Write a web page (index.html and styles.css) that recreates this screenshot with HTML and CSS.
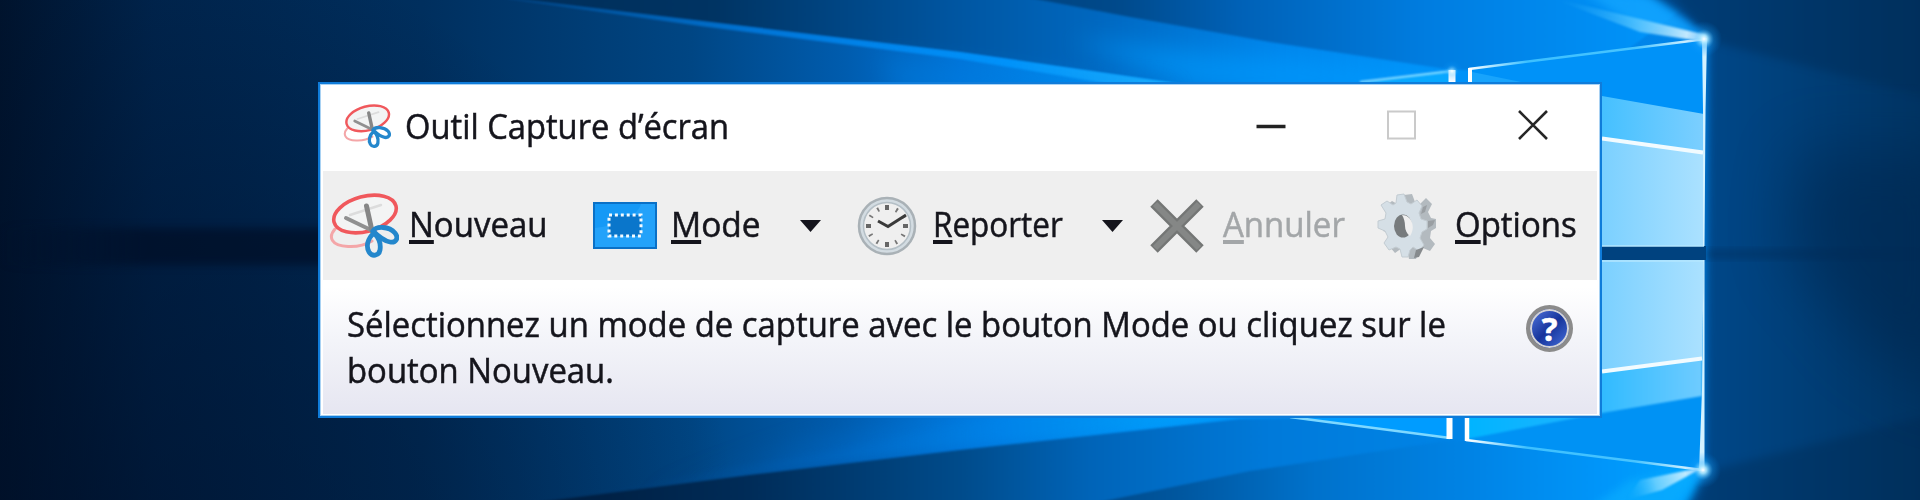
FILE: index.html
```html
<!DOCTYPE html>
<html lang="fr">
<head>
    <meta charset="UTF-8">
    <meta name="viewport" content="width=device-width, initial-scale=1.0">
    <title>Outil Capture d’écran</title>
    <link rel="stylesheet" href="styles.css">
</head>
<body>
    <div class="desktop">
        <svg class="wallpaper" viewBox="0 0 1920 500" aria-hidden="true">
            <defs>
                <linearGradient id="base" x1="0" y1="0" x2="1920" y2="0" gradientUnits="userSpaceOnUse">
                    <stop offset="0" stop-color="#00142e"/>
                    <stop offset="0.08" stop-color="#00254e"/>
                    <stop offset="0.22" stop-color="#002f5e"/>
                    <stop offset="0.36" stop-color="#004684"/>
                    <stop offset="0.44" stop-color="#005cae"/>
                    <stop offset="0.5" stop-color="#0074d8"/>
                    <stop offset="0.6" stop-color="#0096fa"/>
                    <stop offset="0.75" stop-color="#0088ee"/>
                    <stop offset="1" stop-color="#0080e4"/>
                </linearGradient>
                <radialGradient id="leftShade" cx="100" cy="560" r="640" gradientUnits="userSpaceOnUse">
                    <stop offset="0" stop-color="#000d24" stop-opacity="0.6"/>
                    <stop offset="0.5" stop-color="#000d24" stop-opacity="0.35"/>
                    <stop offset="1" stop-color="#000d24" stop-opacity="0"/>
                </radialGradient>
                <linearGradient id="band" x1="0" y1="0" x2="360" y2="0" gradientUnits="userSpaceOnUse">
                    <stop offset="0" stop-color="#000e26" stop-opacity="0"/>
                    <stop offset="0.4" stop-color="#000e26" stop-opacity="0.7"/>
                    <stop offset="1" stop-color="#000e26" stop-opacity="0.7"/>
                </linearGradient>
                <linearGradient id="topOuter" x1="480" y1="0" x2="1420" y2="0" gradientUnits="userSpaceOnUse">
                    <stop offset="0" stop-color="#002d58"/>
                    <stop offset="0.25" stop-color="#003463"/>
                    <stop offset="0.5" stop-color="#0055a0"/>
                    <stop offset="0.66" stop-color="#0068c0"/>
                    <stop offset="0.85" stop-color="#0086ec"/>
                    <stop offset="1" stop-color="#0092f8"/>
                </linearGradient>
                <linearGradient id="topInner" x1="1030" y1="0" x2="1640" y2="0" gradientUnits="userSpaceOnUse">
                    <stop offset="0" stop-color="#004480"/>
                    <stop offset="0.15" stop-color="#004a8c"/>
                    <stop offset="0.35" stop-color="#0062b8"/>
                    <stop offset="0.65" stop-color="#007de0"/>
                    <stop offset="1" stop-color="#0092f8"/>
                </linearGradient>
                <linearGradient id="bottomOuter" x1="550" y1="0" x2="1450" y2="0" gradientUnits="userSpaceOnUse">
                    <stop offset="0" stop-color="#001d3e"/>
                    <stop offset="0.22" stop-color="#002c58"/>
                    <stop offset="0.46" stop-color="#004c8c"/>
                    <stop offset="0.6" stop-color="#0064b8"/>
                    <stop offset="0.8" stop-color="#007ada"/>
                    <stop offset="1" stop-color="#0084e6"/>
                </linearGradient>
                <linearGradient id="bottomInner" x1="1060" y1="0" x2="1700" y2="0" gradientUnits="userSpaceOnUse">
                    <stop offset="0" stop-color="#004480"/>
                    <stop offset="0.18" stop-color="#00569e"/>
                    <stop offset="0.4" stop-color="#0072cc"/>
                    <stop offset="0.65" stop-color="#0084e6"/>
                    <stop offset="0.85" stop-color="#0096fa"/>
                    <stop offset="1" stop-color="#00a4ff"/>
                </linearGradient>
                <linearGradient id="beam" x1="470" y1="0" x2="1180" y2="0" gradientUnits="userSpaceOnUse">
                    <stop offset="0" stop-color="#0060b8" stop-opacity="0.3"/>
                    <stop offset="0.4" stop-color="#007ee6" stop-opacity="0.8"/>
                    <stop offset="0.75" stop-color="#0094fc"/>
                    <stop offset="1" stop-color="#20b4ff"/>
                </linearGradient>
                <linearGradient id="beamLow" x1="560" y1="0" x2="1240" y2="0" gradientUnits="userSpaceOnUse">
                    <stop offset="0" stop-color="#004a90" stop-opacity="0"/>
                    <stop offset="0.4" stop-color="#0068c4" stop-opacity="0.7"/>
                    <stop offset="0.65" stop-color="#0084ea"/>
                    <stop offset="1" stop-color="#00a8ff"/>
                </linearGradient>
                <linearGradient id="rightDark" x1="1700" y1="0" x2="1920" y2="0" gradientUnits="userSpaceOnUse">
                    <stop offset="0" stop-color="#00488a"/>
                    <stop offset="0.45" stop-color="#003f78"/>
                    <stop offset="1" stop-color="#003463"/>
                </linearGradient>
                <linearGradient id="lightPane" x1="1602" y1="0" x2="1704" y2="0" gradientUnits="userSpaceOnUse">
                    <stop offset="0" stop-color="#7bd0ff"/>
                    <stop offset="1" stop-color="#abe1ff"/>
                </linearGradient>
                <linearGradient id="midPane" x1="1602" y1="0" x2="1704" y2="0" gradientUnits="userSpaceOnUse">
                    <stop offset="0" stop-color="#45c0ff"/>
                    <stop offset="1" stop-color="#7ccfff"/>
                </linearGradient>
                <linearGradient id="lowPane" x1="1467" y1="0" x2="1704" y2="0" gradientUnits="userSpaceOnUse">
                    <stop offset="0" stop-color="#00b4ff"/>
                    <stop offset="0.4" stop-color="#18b4ff"/>
                    <stop offset="1" stop-color="#70ccff"/>
                </linearGradient>
                <linearGradient id="edgeLine" x1="1468" y1="0" x2="1706" y2="0" gradientUnits="userSpaceOnUse">
                    <stop offset="0" stop-color="#ffffff"/>
                    <stop offset="0.25" stop-color="#3cc0ff"/>
                    <stop offset="0.7" stop-color="#48c4ff"/>
                    <stop offset="1" stop-color="#ffffff"/>
                </linearGradient>
                <linearGradient id="rayTop" x1="1560" y1="0" x2="1706" y2="38" gradientUnits="userSpaceOnUse">
                    <stop offset="0" stop-color="#28b4ff" stop-opacity="0"/>
                    <stop offset="0.5" stop-color="#6ad0ff" stop-opacity="0.6"/>
                    <stop offset="1" stop-color="#ffffff"/>
                </linearGradient>
                <linearGradient id="rayBottom" x1="1703" y1="470" x2="1625" y2="494" gradientUnits="userSpaceOnUse">
                    <stop offset="0" stop-color="#ffffff"/>
                    <stop offset="0.6" stop-color="#7ad6ff" stop-opacity="0.8"/>
                    <stop offset="1" stop-color="#10acff" stop-opacity="0"/>
                </linearGradient>
                <radialGradient id="flare">
                    <stop offset="0" stop-color="#ffffff"/>
                    <stop offset="0.2" stop-color="#a8e6ff" stop-opacity="0.9"/>
                    <stop offset="0.55" stop-color="#1aa4ff" stop-opacity="0.3"/>
                    <stop offset="1" stop-color="#0090ff" stop-opacity="0"/>
                </radialGradient>
                <filter id="soft1" x="-20%" y="-50%" width="140%" height="200%" color-interpolation-filters="sRGB"><feGaussianBlur stdDeviation="1"/></filter>
                <filter id="soft4" x="-20%" y="-50%" width="140%" height="200%" color-interpolation-filters="sRGB"><feGaussianBlur stdDeviation="4"/></filter>
                <filter id="soft12" x="-50%" y="-80%" width="200%" height="260%" color-interpolation-filters="sRGB"><feGaussianBlur stdDeviation="12"/></filter>
                <filter id="soft30" x="-80%" y="-80%" width="260%" height="260%" color-interpolation-filters="sRGB"><feGaussianBlur stdDeviation="30"/></filter>
            </defs>

            <rect width="1920" height="500" fill="url(#base)"/>
            <rect width="760" height="500" fill="url(#leftShade)"/>
            <rect x="0" y="228" width="360" height="37" fill="url(#band)" filter="url(#soft4)"/>

            <!-- light beams above the window -->
            <path d="M480 -6 L960 53 L1180 84 L1460 90 L1640 -6 Z" fill="url(#topOuter)" filter="url(#soft1)"/>
            <path d="M1070 40 Q1250 56 1440 74 L1400 96 L1200 90 Z" fill="#009cff" opacity="0.6" filter="url(#soft12)"/>
            <path d="M1020 -4 L1130 17 L1270 42 L1452 70 L1600 70 L1700 -4 Z" fill="url(#topInner)" filter="url(#soft1)"/>
            <path d="M460 -8 L960 52 L1180 84 L1110 84 L960 59 L700 26 Z" fill="url(#beam)" filter="url(#soft1)"/>
            <path d="M880 58 L1180 88 L1160 96 L900 96 Z" fill="#0080e4" opacity="0.4" filter="url(#soft12)"/>

            <!-- light beams below the window -->
            <path d="M640 500 L750 470 L960 440 L1240 408 L1000 408 L800 446 Z" fill="url(#beamLow)" filter="url(#soft12)"/>
            <path d="M560 502 L750 474 L960 446 L1240 416 L1020 414 L800 458 Z" fill="url(#beamLow)" opacity="0.8" filter="url(#soft4)"/>
            <path d="M540 502 L750 475 L960 450 L1240 419 L1480 414 L1740 510 Z" fill="url(#bottomOuter)" filter="url(#soft1)"/>
            <path d="M1090 504 L1250 471 L1452 440 L1720 460 L1720 504 Z" fill="url(#bottomInner)" filter="url(#soft1)"/>

            <!-- dark side, right of the logo -->
            <path d="M1636 -10 Q1680 10 1708 40 L1704 470 Q1696 490 1684 512 L1940 512 L1940 -10 Z" fill="url(#rightDark)" filter="url(#soft4)"/>
            <path d="M1712 42 L1930 98 L1930 -20 L1660 -20 Z" fill="#002a54" opacity="0.4" filter="url(#soft4)"/>
            <path d="M1712 470 L1930 415 L1930 520 L1690 520 Z" fill="#00284f" opacity="0.35" filter="url(#soft4)"/>
            <path d="M1800 150 L1960 150 L1960 400 L1870 350 L1790 255 Z" fill="#00244a" opacity="0.5" filter="url(#soft30)"/>
            <rect x="1706" y="250" width="220" height="8" fill="#002a55" opacity="0.5" filter="url(#soft4)"/>

            <!-- corner flares -->
            <path d="M1580 -10 L1650 -4 L1704 36 L1640 28 Z" fill="#14a6ff" opacity="0.75" filter="url(#soft4)"/>
            <path d="M1545 -4 L1706 35 L1706 42 L1640 32 Z" fill="url(#rayTop)" filter="url(#soft1)"/>
            <path d="M1703 468 L1630 480 L1590 508 L1675 508 Z" fill="#0cb0ff" opacity="0.6" filter="url(#soft4)"/>
            <path d="M1704 467 L1640 480 L1626 500 L1662 490 Z" fill="url(#rayBottom)" filter="url(#soft1)"/>

            <!-- left panes, mostly covered by the window -->
            <path d="M1360 82 L1452 70 L1452 90 L1340 90 Z" fill="#08a8ff"/>
            <path d="M1360 82 L1452 71" stroke="#8edcff" stroke-width="2" filter="url(#soft1)"/>
            <path d="M1290 418 L1452 438 L1452 410 Z" fill="#009cff"/>
            <path d="M1290 417 L1450 438" stroke="#7ed8ff" stroke-width="2.5"/>
            <path d="M1452 70 V90" stroke="#ffffff" stroke-width="7"/>
            <path d="M1449.500 410 V439" stroke="#ffffff" stroke-width="6"/>

            <!-- right panes -->
            <path d="M1468 68 L1706 38 L1704 246 L1468 246 Z" fill="#0092f8"/>
            <path d="M1472 72 L1560 90 L1472 90 Z" fill="#28b0ff" opacity="0.6"/>
            <path d="M1602 96 L1704 114 L1704 154 L1602 139 Z" fill="url(#midPane)"/>
            <path d="M1602 138 L1704 153 L1704 246 L1602 246 Z" fill="url(#lightPane)"/>
            <path d="M1602 138.500 L1703 152.500" stroke="#f2fbff" stroke-width="4"/>
            <rect x="1600" y="246" width="106" height="14" fill="#00427f"/>
            <path d="M1467 260 L1704 260 L1702 470 L1467 440 Z" fill="#0092f4"/>
            <path d="M1467 371 H1602 L1702 358 V396 L1602 413 L1467 439 Z" fill="url(#lowPane)" filter="url(#soft1)"/>
            <path d="M1602 260 L1704 260 L1702 359 L1602 371 Z" fill="url(#lightPane)"/>
            <path d="M1602 371.500 L1702 358.500" stroke="#f2fbff" stroke-width="4"/>
            <path d="M1602 246 H1704 M1602 261 H1704" stroke="#b4e6ff" stroke-width="1.500"/>
            <path d="M1469 69 L1706 39" stroke="url(#edgeLine)" stroke-width="2.500"/>
            <path d="M1466 440 L1703 470" stroke="url(#edgeLine)" stroke-width="2.500"/>
            <path d="M1470 68 V90" stroke="#ffffff" stroke-width="4"/>
            <path d="M1467 410 V441" stroke="#ffffff" stroke-width="4.500"/>
            <path d="M1702 38 L1707 38 L1705.500 110 L1704.500 246 L1703 246 L1703 110 Z" fill="#d4f2ff"/>
            <path d="M1703.500 260 L1704.500 260 L1704.500 471 L1699 471 L1702 390 Z" fill="#d4f2ff"/>
            <circle cx="1704" cy="39" r="18" fill="url(#flare)"/>
            <circle cx="1703" cy="470" r="18" fill="url(#flare)"/>
            <circle cx="1452" cy="71" r="11" fill="url(#flare)" opacity="0.6"/>
        </svg>

        <div class="window">
            <div class="title-bar">
                <svg class="title-icon" viewBox="0 0 70 66" aria-hidden="true">
                    <use href="#scissors"/>
                </svg>
                <h1 class="title"><span>Outil Capture d’écran</span></h1>
                <div class="window-controls">
                    <svg viewBox="0 0 30 30"><path d="M0.500 16.500 H29.500" stroke="#222" stroke-width="3.500"/></svg>
                    <svg viewBox="0 0 30 30"><rect x="1" y="1.500" width="27" height="27" fill="none" stroke="#cacaca" stroke-width="2"/></svg>
                    <svg viewBox="0 0 30 30"><path d="M1 1 L29 29 M29 1 L1 29" stroke="#262626" stroke-width="2.600"/></svg>
                </div>
            </div>

            <div class="toolbar">
                <button class="tool new">
                    <svg class="icon-new" viewBox="0 0 70 66">
                        <g id="scissors" fill="none" stroke-linecap="round">
                            <path d="M6 36 C-1 44 2 53 19 53.500 C29 54 38 51 43 48" stroke="#f4a6a8" stroke-width="3"/>
                            <ellipse cx="36" cy="21" rx="32" ry="17.500" transform="rotate(-15 36 21)" fill="#f3f4f4" stroke="#f0585c" stroke-width="3.600"/>
                            <path d="M21 22 L52 12" stroke="#dcdcdc" stroke-width="2.500"/>
                            <path d="M17 25 L44 38" stroke="#909090" stroke-width="4"/>
                            <path d="M37.500 13 L43 38" stroke="#868686" stroke-width="5"/>
                            <path d="M44 38 C47 33 60 33 66 40 C70 45 67 50 61 49 C55 48 49 43 44 38 Z" stroke="#2487cc" stroke-width="4.800"/>
                            <path d="M45 40 C38 46 37 54 40 59 C43 64 50 63 51 57 C52 51 50 45 45 40 Z" stroke="#2487cc" stroke-width="4.800"/>
                        </g>
                    </svg>
                    <span class="label"><u>N</u>ouveau</span>
                </button>

                <button class="tool mode">
                    <svg class="icon-mode" viewBox="0 0 64 47">
                        <rect x="1" y="1" width="62" height="45" fill="#1599f6" stroke="#0a70c6" stroke-width="2"/>
                        <path d="M2 26 C20 24 44 16 48 2 H62 V45 H2 Z" fill="#35adff" opacity="0.45"/>
                        <rect x="16" y="13" width="32" height="21" fill="#0a76cb" stroke="#f4fbff" stroke-width="3" stroke-dasharray="3 2.900"/>
                    </svg>
                    <span class="label"><u>M</u>ode</span>
                    <svg class="arrow" viewBox="0 0 21 12"><path d="M0 0 H21 L10.500 12 Z" fill="#14141c"/></svg>
                </button>

                <button class="tool delay">
                    <svg class="icon-clock" viewBox="0 0 60 60">
                        <circle cx="30" cy="30" r="28" fill="#d3dce2" stroke="#a9b1b6" stroke-width="2.500"/>
                        <circle cx="30" cy="30" r="23.500" fill="#efefef" stroke="#b4bfc6" stroke-width="1.500"/>
                        <circle cx="30" cy="30" r="18.500" fill="none" stroke="#777" stroke-width="4.500" stroke-dasharray="1.800 7.886" stroke-dashoffset="0.900"/>
                        <path d="M30 9 V14 M30 46 V51 M9 30 H14 M46 30 H51" stroke="#666" stroke-width="4"/>
                        <path d="M21 25 L31 30.500 L49 19" fill="none" stroke="#3a3a3a" stroke-width="3"/>
                    </svg>
                    <span class="label"><u>R</u>eporter</span>
                    <svg class="arrow" viewBox="0 0 21 12"><path d="M0 0 H21 L10.500 12 Z" fill="#14141c"/></svg>
                </button>

                <button class="tool cancel" disabled>
                    <svg class="icon-cancel" viewBox="0 0 54 54">
                        <path d="M4 4 L50 50 M50 4 L4 50" stroke="#747675" stroke-width="10.500"/>
                        <path d="M5 5 L49 49 M49 5 L5 49" stroke="#858786" stroke-width="6"/>
                    </svg>
                    <span class="label"><u>A</u>nnuler</span>
                </button>

                <button class="tool options">
                    <svg class="icon-gear" viewBox="0 0 60 68">
                        <!-- back face of the gear, shifted for depth -->
                        <path transform="translate(5 1)" fill="#b3babf" d="M22 2 L30 1 L33 9 L38 11 L44 5 L50 11 L46 19 L49 25 L54 26 L54 35 L49 38 L48 45 L53 51 L48 58 L41 55 L37 58 L34 66 L27 66 L25 58 L20 55 L13 60 L7 53 L11 46 L8 40 L1 38 L1 30 L8 27 L9 21 L4 13 L10 8 L17 12 L21 10 Z"/>
                        <path fill="#d5dfe6" stroke="#c3ccd2" stroke-width="1" stroke-linejoin="round" d="M20 3 L27 2 L30 10 L34 12 L40 8 L45 14 L42 21 L44 27 L50 29 L50 37 L45 40 L43 46 L47 53 L42 59 L36 55 L33 58 L31 65 L25 65 L23 57 L19 55 L12 58 L7 51 L11 45 L8 39 L1 36 L1 29 L8 27 L9 21 L4 13 L10 9 L16 13 L19 11 Z"/>
                        <ellipse cx="26" cy="34" rx="9" ry="11.500" fill="#777b7d"/>
                        <path d="M25 23 C35 23 39 36 33 44 C30 42 28 38 28 34 C28 30 27 26 25 23 Z" fill="#efefef"/>
                        <path d="M39 58 L47 55 L42 65 L37 66 Z" fill="#868a8d"/>
                        <path d="M46 15 L50 13 L48 20 L44 22 Z M51 29 L58 28 L56 33 L51 36 Z" fill="#9a9fa3"/>
                    </svg>
                    <span class="label"><u>O</u>ptions</span>
                </button>
            </div>

            <div class="message">
                <p><span>Sélectionnez un mode de capture avec le bouton Mode ou cliquez sur le</span><br><span>bouton Nouveau.</span></p>
                <div class="help">?</div>
            </div>
        </div>
    </div>
</body>
</html>
```

FILE: styles.css
```css
* {
    box-sizing: border-box;
    margin: 0;
    padding: 0;
}
body {
    width: 1920px;
    height: 500px;
    overflow: hidden;
    font-family: "Open Sans", "Noto Sans", sans-serif;
    font-size: 34px;
    color: #15151c;
    -webkit-text-stroke: 0.5px;
}
.desktop {
    position: relative;
    width: 1920px;
    height: 500px;
    overflow: hidden;
    background-color: #00234a;
}
svg {
    display: block;
    flex: none;
}
.wallpaper {
    width: 1920px;
    height: 500px;
}
.window {
    position: absolute;
    left: 318px;
    top: 82px;
    width: 1284px;
    height: 336px;
    display: flex;
    flex-direction: column;
    background-color: #FFFFFF;
    border: 2px solid #0f7cda;
    box-shadow: inset 0 0 0 1px #a9d2f3;
}
.title-bar {
    display: flex;
    align-items: flex-start;
    height: 87px;
    padding: 20px 52px 0 23px;
}
.title-icon {
    width: 48px;
    height: 45px;
}
.title {
    margin-left: 14px;
    margin-top: -1px;
    font-size: 34px;
    font-weight: 400;
    line-height: 46px;
    white-space: nowrap;
}
.title span {
    display: inline-block;
    transform-origin: left;
    transform: scaleX(0.962);
}
.window-controls {
    display: flex;
    gap: 101px;
    margin-left: auto;
    margin-top: 6px;
}
.window-controls svg {
    width: 30px;
    height: 30px;
}
.toolbar {
    display: flex;
    height: 109px;
    margin: 0 3px;
    background-color: #efefef;
}
.tool {
    display: flex;
    align-items: center;
    flex: none;
    border: none;
    background: none;
    font: inherit;
    color: inherit;
    -webkit-text-stroke: 0.5px;
}
.label {
    display: block;
    margin-bottom: 3px;
    line-height: 46px;
    text-align: left;
    white-space: nowrap;
    transform-origin: left;
    transform: scaleX(0.97);
}
.label u {
    text-decoration-thickness: 4px;
    text-underline-offset: 3px;
}
.new {
    width: 264px;
    padding-left: 6px;
}
.icon-new {
    width: 70px;
    height: 66px;
    margin-right: 10px;
}
.mode {
    width: 270px;
    padding-left: 6px;
}
.icon-mode {
    width: 64px;
    height: 47px;
    margin-right: 14px;
}
.mode .label {
    flex: none;
    width: 129px;
    transform: scaleX(0.985);
}
.delay {
    width: 293px;
}
.icon-clock {
    width: 60px;
    height: 60px;
    margin-right: 16px;
}
.delay .label {
    flex: none;
    width: 169px;
    transform: scaleX(0.925);
}
.arrow {
    width: 21px;
    height: 12px;
}
.cancel {
    width: 227px;
}
.icon-cancel {
    width: 54px;
    height: 54px;
    margin-right: 19px;
}
.cancel .label {
    color: #a3a6a8;
}
.icon-gear {
    width: 60px;
    height: 68px;
    margin-right: 18px;
}
.message {
    display: flex;
    flex: 1;
    align-items: flex-start;
    justify-content: space-between;
    margin: 0 3px 2px;
    padding: 22px 24px 0 24px;
    background: linear-gradient(#FFFFFF 5%, #f3f4f9 45%, #e6e6f1);
}
.message p {
    line-height: 45.5px;
    white-space: nowrap;
}
.message p span {
    display: inline-block;
    transform-origin: left;
    transform: scaleX(0.967);
}
.help {
    width: 47px;
    height: 47px;
    margin-top: 3px;
    border: 4px solid #8b8b8b;
    border-radius: 50%;
    box-shadow: inset 0 0 0 2px #d3d3d6;
    background: linear-gradient(135deg, #4366ce 15%, #16349b 50%, #3a60cb 85%);
    color: #FFFFFF;
    font-size: 33px;
    font-weight: 700;
    line-height: 39px;
    text-align: center;
}
```
